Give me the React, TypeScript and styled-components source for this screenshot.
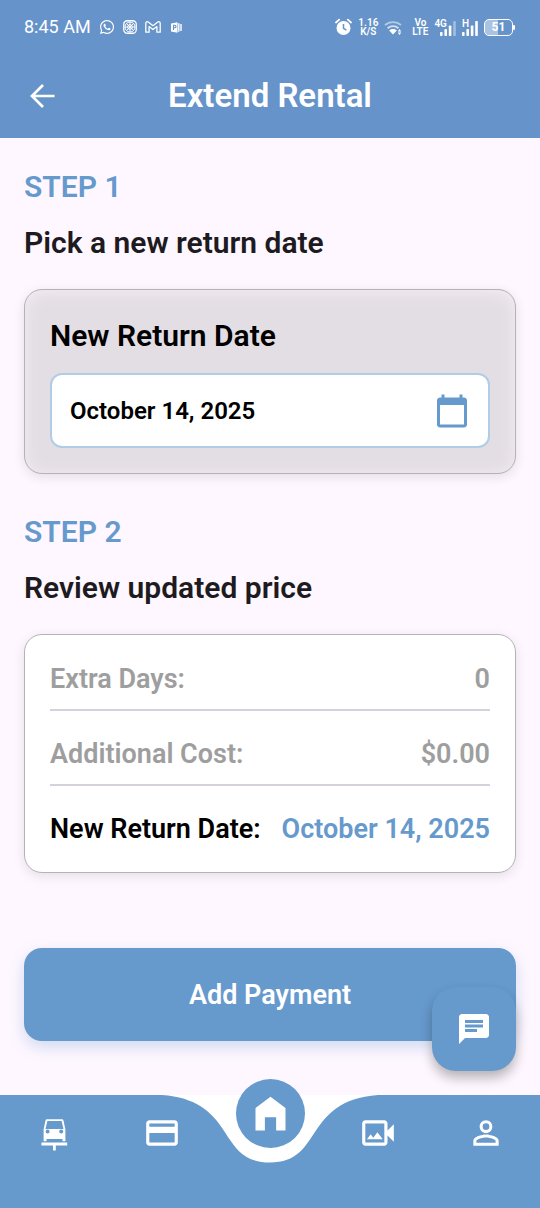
import React, { useState } from "react";
import styled, { createGlobalStyle } from "styled-components";
import {
  MdCalendarToday,
  MdChat,
  MdOutlineCreditCard,
  MdOutlineVideoCameraBack,
  MdPersonOutline,
} from "react-icons/md";
import { FaWhatsapp } from "react-icons/fa";

const color = {
  bar: "#6693c9",
  primary: "#6699cc",
  page: "#fef7ff",
  ink: "#1d1b20",
  muted: "#9e9e9e",
  line: "#d6d1dc",
};

const GlobalStyle = createGlobalStyle`
  *, *::before, *::after { box-sizing: border-box; }
  body {
    margin: 0;
    background: ${color.page};
    font-family: Roboto, "Liberation Sans", sans-serif;
  }
  svg { display: block; flex: none; }
`;

const Screen = styled.div`
  display: flex;
  flex-direction: column;
  min-height: 100vh;
  background: ${color.page};
`;

const Header = styled.header`
  background: ${color.bar};
  color: #fff;
`;

const StatusBar = styled.div`
  display: flex;
  align-items: center;
  justify-content: space-between;
  height: 54px;
  padding: 0 27px 0 24px;
`;

const StatusGroup = styled.div<{ $gap: number }>`
  display: flex;
  align-items: center;
  gap: ${(p) => p.$gap}px;
`;

const Clock = styled.span`
  font-size: 18px;
  line-height: 22px;
  white-space: nowrap;
`;

const TinyStack = styled.span`
  display: flex;
  flex-direction: column;
  align-items: center;
  font-size: 10px;
  font-weight: 600;
  line-height: 9px;
`;

const Signal = styled.span`
  display: flex;
  align-items: flex-start;
  font-size: 10px;
  font-weight: 600;
  line-height: 9px;

  svg {
    margin: 2px 0 0 -7px;
  }
`;

const AppBar = styled.div`
  display: grid;
  grid-template-columns: 36px 1fr 36px;
  align-items: center;
  height: 84px;
  padding: 0 24px;
`;

const IconButton = styled.button`
  display: flex;
  padding: 0;
  border: 0;
  background: none;
  color: inherit;
  cursor: pointer;
`;

const PageTitle = styled.h1`
  margin: 0;
  font-size: 33px;
  font-weight: 600;
  line-height: 40px;
  text-align: center;
`;

const Main = styled.main`
  flex: 1;
  display: flex;
  flex-direction: column;
  padding: 31px 24px 54px;
`;

const Step = styled.section`
  display: flex;
  flex-direction: column;

  & + & {
    margin-top: 40px;
  }
`;

const StepNumber = styled.p`
  margin: 0 0 20px;
  color: ${color.primary};
  font-size: 30px;
  font-weight: 600;
  line-height: 36px;
`;

const StepTitle = styled.h2`
  margin: 0 0 28px;
  color: ${color.ink};
  font-size: 30px;
  font-weight: 600;
  line-height: 36px;
`;

const Card = styled.div`
  display: flex;
  flex-direction: column;
  border: 1px solid #b5b3b6;
  border-radius: 18px;
`;

const DateCard = styled(Card)`
  gap: 16px;
  padding: 25px;
  background: #e3dee3;
  box-shadow: inset 0 2px 16px #f4eef5, 0 3px 12px rgba(0, 0, 0, 0.1);
`;

const PriceCard = styled(Card)`
  padding: 28px 25px 27px;
  background: #fff;
  box-shadow: 0 3px 12px rgba(0, 0, 0, 0.1);
`;

const FieldLabel = styled.label`
  color: #000;
  font-size: 30px;
  font-weight: 600;
  line-height: 42px;
`;

const DateField = styled.div`
  display: flex;
  align-items: center;
  height: 75px;
  padding: 0 18px;
  border: 2px solid #b0cce6;
  border-radius: 12px;
  background: #fff;
  color: ${color.primary};
`;

const DateInput = styled.input`
  flex: 1;
  min-width: 0;
  padding: 0;
  border: 0;
  outline: 0;
  background: none;
  color: #000;
  font: 600 24px/30px Roboto, "Liberation Sans", sans-serif;
`;

const PriceList = styled.dl`
  display: flex;
  flex-direction: column;
  gap: 27px;
  margin: 0;
`;

const PriceRow = styled.div<{ $active?: boolean }>`
  display: flex;
  justify-content: space-between;
  color: ${(p) => (p.$active ? "#000" : color.muted)};
  font-size: 27px;
  font-weight: 600;
  line-height: 32px;

  &:not(:last-child) {
    padding-bottom: 14px;
    border-bottom: 2px solid ${color.line};
  }

  dd {
    margin: 0;
    color: ${(p) => (p.$active ? color.primary : "inherit")};
  }
`;

const PayButton = styled.button`
  height: 93px;
  margin-top: 75px;
  border: 0;
  border-radius: 18px;
  background: ${color.primary};
  box-shadow: 0 6px 15px rgba(102, 153, 204, 0.3);
  color: #fff;
  font: 600 27px/32px Roboto, "Liberation Sans", sans-serif;
  cursor: pointer;
`;

const BottomNav = styled.nav`
  position: sticky;
  bottom: 0;
  padding-bottom: 37px;
  background: ${color.primary};
`;

const Notch = styled.svg`
  position: absolute;
  top: 0;
  left: 50%;
  transform: translateX(-50%);
`;

const NavList = styled.ul`
  position: relative;
  display: grid;
  grid-template-columns: repeat(5, 1fr);
  height: 76px;
  margin: 0;
  padding: 0;
  list-style: none;
`;

const NavItem = styled.li`
  display: flex;
  align-items: center;
  justify-content: center;
`;

const NavLink = styled.a`
  display: flex;
  color: #fff;
`;

const HomeLink = styled.a`
  display: flex;
  align-items: center;
  justify-content: center;
  align-self: flex-start;
  width: 69px;
  height: 69px;
  margin-top: -16px;
  border-radius: 50%;
  background: ${color.primary};
  color: #fff;
`;

const ChatButton = styled.button`
  position: absolute;
  right: 24px;
  bottom: calc(100% + 24px);
  display: flex;
  align-items: center;
  justify-content: center;
  width: 84px;
  height: 84px;
  border: 0;
  border-radius: 24px;
  background: ${color.primary};
  box-shadow: 0 7px 12px rgba(0, 0, 0, 0.28);
  color: #fff;
  cursor: pointer;
`;

const BackIcon = () => (
  <svg width="36" height="36" viewBox="0 0 36 36" fill="none" stroke="currentColor" strokeWidth="2.7" aria-hidden="true">
    <path d="M19 7L8 18l11 11M8 18h22.5" />
  </svg>
);

const CarLiftIcon = () => (
  <svg width="40" height="42" viewBox="0 0 40 42" fill="currentColor" aria-hidden="true">
    <path
      fillRule="evenodd"
      d="M13.2 7.2h14.6c.9 0 1.5.5 1.7 1.3l1.9 9v11.8h-2.9V27h-16v2.3H9.6V17.5l1.9-9c.2-.8.8-1.3 1.7-1.3zM13.4 8.9l-1.9 8.2h18l-1.9-8.2zM13.6 17.4a2 2 0 1 0 0 4 2 2 0 0 0 0-4zM27.2 17.4a2 2 0 1 0 0 4 2 2 0 0 0 0-4z"
    />
    <path d="M7.4 30.4h25.8v3H21.8v5H19v-5H7.4z" />
  </svg>
);

const AlarmIcon = () => (
  <svg width="17" height="18" viewBox="0 0 17 18" aria-hidden="true">
    <circle cx="8.5" cy="10" r="7" fill="#fff" />
    <path d="M1 4.5L4.2 1.6M16 4.5l-3.2-2.9" stroke="#fff" strokeWidth="1.8" strokeLinecap="round" />
    <path d="M8.5 6v4.3l2.8 1.9" fill="none" stroke={color.bar} strokeWidth="1.5" />
  </svg>
);

const PatternIcon = () => (
  <svg width="14" height="14" viewBox="0 0 14 14" fill="none" stroke="#fff" aria-hidden="true">
    <rect x="0.75" y="0.75" width="12.5" height="12.5" rx="3.5" strokeWidth="1.3" />
    <circle cx="7" cy="7" r="5" strokeWidth="1" />
    <circle cx="7" cy="7" r="2.4" strokeWidth="1" />
    <path d="M7 2v10M2 7h10M3.5 3.5l7 7M10.5 3.5l-7 7" strokeWidth="0.9" />
  </svg>
);

const MailIcon = () => (
  <svg width="16" height="12" viewBox="0 0 16 12" fill="none" stroke="#fff" strokeWidth="1.3" strokeLinejoin="round" aria-hidden="true">
    <path d="M0.8 2.2C0.8 0.8 2.2 0.3 3.2 1L8 4.7 12.8 1c1-.7 2.4-.2 2.4 1.2v9h-3.3V5.6L8 8.6 4.1 5.6v5.6H.8z" />
  </svg>
);

const DocIcon = () => (
  <svg width="13" height="11" viewBox="-2 0 13 11" aria-hidden="true">
    <path d="M0 1.5L6.5.3v10.4L0 9.5z" fill="#fff" />
    <path d="M2.5 8V3.2h1.2a1.2 1.2 0 0 1 0 2.6H2.5" fill="none" stroke={color.bar} strokeWidth="1.1" />
    <path d="M7.8 1.2v8.6M10 2v7" stroke="#fff" strokeWidth="1.4" />
  </svg>
);

const WifiIcon = () => (
  <svg width="22" height="17" viewBox="0 0 22 17" fill="none" stroke="#fff" strokeWidth="1.8" aria-hidden="true">
    <path d="M1 6.2a12 12 0 0 1 16 0" opacity="0.5" />
    <path d="M3.6 9.2a8.2 8.2 0 0 1 10.8 0" opacity="0.7" />
    <path d="M5.2 11.4a5.6 5.6 0 0 1 7.6 0L9 15.4z" fill="#fff" stroke="none" />
    <path d="M15.5 10l1.8 2.4h-3.6zM15.5 16l1.8-2.4h-3.6z" fill="#fff" stroke="none" />
  </svg>
);

const SignalBars = ({ weak }: { weak?: boolean }) => (
  <svg width="16" height="15" viewBox="0 0 16 15" fill="#fff" aria-hidden="true">
    <rect x="0" y="11" width="2.6" height="4" rx="0.8" />
    <rect x="4.4" y="8" width="2.6" height="7" rx="0.8" />
    <rect x="8.8" y="4.5" width="2.6" height="10.5" rx="0.8" />
    <rect x="13.2" y="0" width="2.6" height="15" rx="0.8" opacity={weak ? 0.4 : 1} />
  </svg>
);

const Battery = styled.span`
  position: relative;
  width: 29px;
  height: 17px;
  border: 1px solid #fff;
  border-radius: 5px;
  background: linear-gradient(90deg, #a9c3e2 50%, transparent 50%);
  font-size: 12px;
  font-weight: 700;
  line-height: 15px;
  text-align: center;

  &::after {
    content: "";
    position: absolute;
    top: 5px;
    right: -3px;
    width: 2px;
    height: 5px;
    border-radius: 1px;
    background: #fff;
  }
`;

const HomeIcon = () => (
  <svg width="45" height="45" viewBox="0 0 24 24" fill="currentColor" aria-hidden="true">
    <path d="M12 3L4 9v12h5v-7h6v7h5V9z" />
  </svg>
);

export default function App() {
  const [date, setDate] = useState("October 14, 2025");

  return (
    <>
      <GlobalStyle />
      <Screen>
        <Header>
          <StatusBar>
            <StatusGroup $gap={8}>
              <Clock>8:45 AM</Clock>
              <FaWhatsapp size={16} aria-hidden="true" />
              <PatternIcon />
              <MailIcon />
              <DocIcon />
            </StatusGroup>
            <StatusGroup $gap={6}>
              <AlarmIcon />
              <TinyStack>
                <span>1.16</span>
                <span>K/S</span>
              </TinyStack>
              <WifiIcon />
              <TinyStack>
                <span>Vo</span>
                <span>LTE</span>
              </TinyStack>
              <Signal>
                4G
                <SignalBars weak />
              </Signal>
              <Signal>
                H
                <SignalBars />
              </Signal>
              <Battery>51</Battery>
            </StatusGroup>
          </StatusBar>
          <AppBar>
            <IconButton type="button" aria-label="Back">
              <BackIcon />
            </IconButton>
            <PageTitle>Extend Rental</PageTitle>
          </AppBar>
        </Header>

        <Main>
          <Step>
            <StepNumber>STEP 1</StepNumber>
            <StepTitle>Pick a new return date</StepTitle>
            <DateCard>
              <FieldLabel htmlFor="return-date">New Return Date</FieldLabel>
              <DateField>
                <DateInput id="return-date" type="text" value={date} onChange={(e) => setDate(e.target.value)} />
                <IconButton type="button" aria-label="Open calendar">
                  <MdCalendarToday size={36} />
                </IconButton>
              </DateField>
            </DateCard>
          </Step>

          <Step>
            <StepNumber>STEP 2</StepNumber>
            <StepTitle>Review updated price</StepTitle>
            <PriceCard>
              <PriceList>
                <PriceRow>
                  <dt>Extra Days:</dt>
                  <dd>0</dd>
                </PriceRow>
                <PriceRow>
                  <dt>Additional Cost:</dt>
                  <dd>$0.00</dd>
                </PriceRow>
                <PriceRow $active>
                  <dt>New Return Date:</dt>
                  <dd>{date}</dd>
                </PriceRow>
              </PriceList>
            </PriceCard>
          </Step>

          <PayButton type="button">Add Payment</PayButton>
        </Main>

        <BottomNav aria-label="Main">
          <ChatButton type="button" aria-label="Chat">
            <MdChat size={36} />
          </ChatButton>
          <Notch width="216" height="68" viewBox="0 0 216 68" aria-hidden="true">
            <path d="M0 0C75.6 5.6 54 67.5 108 67.5S140.4 5.6 216 0z" fill="#fff" />
          </Notch>
          <NavList>
            <NavItem>
              <NavLink href="#rentals" aria-label="Rentals">
                <CarLiftIcon />
              </NavLink>
            </NavItem>
            <NavItem>
              <NavLink href="#payments" aria-label="Payments">
                <MdOutlineCreditCard size={38} />
              </NavLink>
            </NavItem>
            <NavItem>
              <HomeLink href="#home" aria-label="Home">
                <HomeIcon />
              </HomeLink>
            </NavItem>
            <NavItem>
              <NavLink href="#media" aria-label="Media">
                <MdOutlineVideoCameraBack size={38} />
              </NavLink>
            </NavItem>
            <NavItem>
              <NavLink href="#profile" aria-label="Profile">
                <MdPersonOutline size={38} />
              </NavLink>
            </NavItem>
          </NavList>
        </BottomNav>
      </Screen>
    </>
  );
}
